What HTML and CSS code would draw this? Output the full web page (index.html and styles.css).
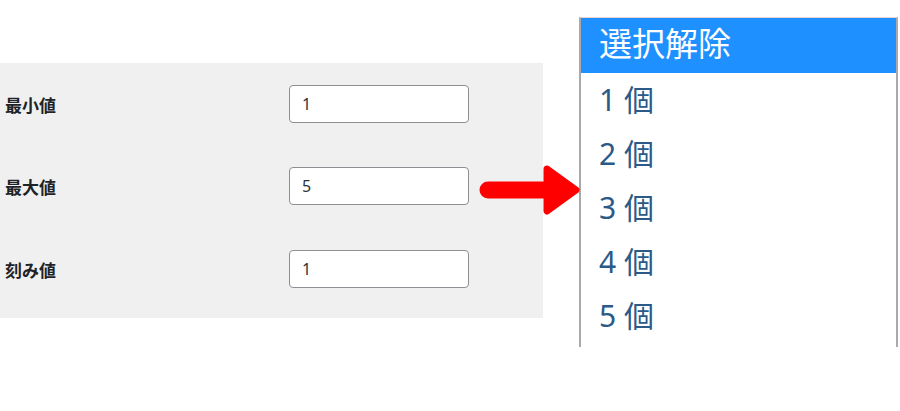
FILE: index.html
```html
<!DOCTYPE html>
<html lang="ja">
<head>
    <meta charset="UTF-8">
    <meta name="viewport" content="width=device-width, initial-scale=1.0">
    <title>数値設定</title>
    <link rel="stylesheet" href="styles.css">
</head>
<body>
    <div class="stage">
        <div class="panel">
            <div class="row">
                <label for="minVal">最小値</label>
                <input type="text" id="minVal" value="1">
            </div>
            <div class="row">
                <label for="maxVal">最大値</label>
                <input type="text" id="maxVal" value="5">
            </div>
            <div class="row">
                <label for="stepVal">刻み値</label>
                <input type="text" id="stepVal" value="1">
            </div>
        </div>

        <svg class="arrow" width="104" height="56" viewBox="0 0 104 56">
            <line x1="10" y1="27" x2="72" y2="27" stroke="#ff0000" stroke-width="17" stroke-linecap="round"/>
            <polygon points="69,6 98,27 69,48" fill="#ff0000" stroke="#ff0000" stroke-width="7" stroke-linejoin="round"/>
        </svg>

        <div class="dropdown">
            <div class="option selected">選択解除</div>
            <div class="option">1 個</div>
            <div class="option">2 個</div>
            <div class="option">3 個</div>
            <div class="option">4 個</div>
            <div class="option">5 個</div>
        </div>
    </div>
</body>
</html>
```

FILE: styles.css
```css
body {
    margin: 0;
    background: #fff;
    font-family: 'Noto Sans', 'Noto Sans CJK JP', sans-serif;
    overflow: hidden;
}
.stage {
    position: relative;
    display: flex;
    align-items: flex-start;
    height: 411px;
}
.panel {
    width: 543px;
    height: 255px;
    margin-top: 63px;
    padding: 22px 0 0 5px;
    box-sizing: border-box;
    background: #f0f0f1;
    display: flex;
    flex-direction: column;
    gap: 44px;
}
.row {
    display: flex;
    align-items: center;
    height: 38px;
}
.row:nth-child(3) {
    margin-top: 1px;
}
.row label {
    width: 284px;
    font-family: 'Noto Sans CJK JP', sans-serif;
    font-weight: bold;
    font-size: 17px;
    color: #1d2327;
}
.row input {
    width: 180px;
    height: 38px;
    box-sizing: border-box;
    border: 1px solid #8c8f94;
    border-radius: 4px;
    background: #fff;
    padding: 0 12px;
    font-family: 'Noto Sans', sans-serif;
    font-size: 16px;
    color: #2c3338;
}
.arrow {
    position: absolute;
    left: 478px;
    top: 163px;
}
.dropdown {
    margin-left: 36px;
    margin-top: 17px;
    width: 319px;
    height: 330px;
    box-sizing: border-box;
    border-top: 1px solid #eccfd0;
    border-left: 2px solid #a9a9a9;
    border-right: 2px solid #a9a9a9;
    background: #fff;
    overflow: hidden;
}
.option {
    height: 54px;
    line-height: 54px;
    padding-left: 18px;
    font-size: 30px;
    color: #2b5a88;
    white-space: nowrap;
}
.option.selected {
    height: 55px;
    line-height: 52px;
    background: #1e90ff;
    color: #fff;
    font-size: 33px;
}
```
